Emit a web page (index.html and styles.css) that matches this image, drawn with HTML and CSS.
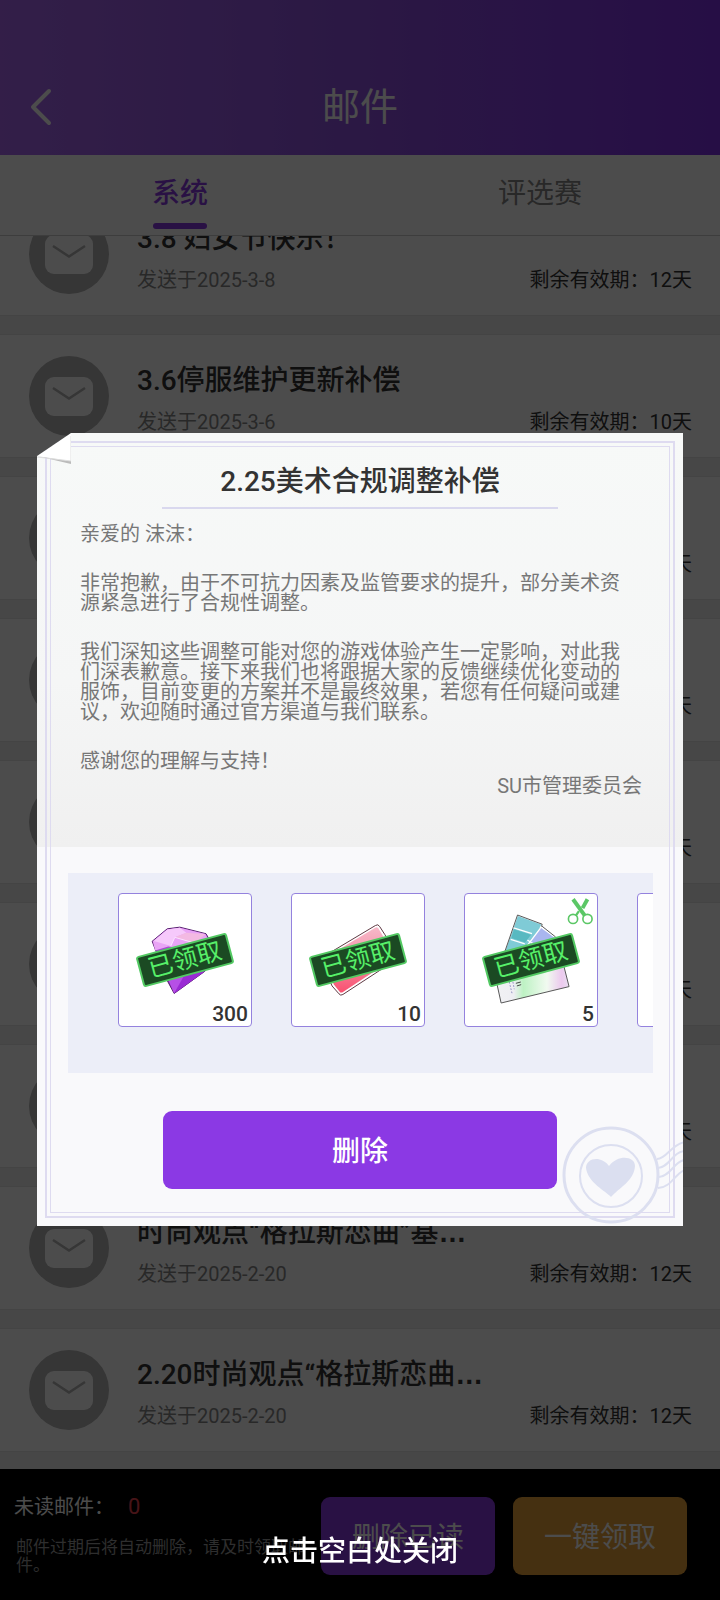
FILE: index.html
```html
<!DOCTYPE html>
<html lang="zh-CN">
<head>
<meta charset="utf-8">
<meta name="viewport" content="width=device-width, initial-scale=1">
<title>邮件</title>
<link rel="stylesheet" href="styles.css">
</head>
<body>
<svg class="defs" aria-hidden="true">
  <symbol id="mail" viewBox="0 0 80 80">
    <circle cx="40" cy="40" r="40" fill="#b4b4b4"/>
    <rect x="16" y="21" width="48" height="39" rx="9" fill="#fff"/>
    <path d="M24 32 40 42.500 56 32" fill="none" stroke="#b4b4b4" stroke-width="2.500"/>
  </symbol>
</svg>

<div class="page">
  <header class="topbar">
    <button class="back" aria-label="返回">
      <svg viewBox="0 0 24 40"><path d="M20 4 4 20 20 36" fill="none" stroke="currentColor" stroke-width="4" stroke-linecap="round" stroke-linejoin="round"/></svg>
    </button>
    <h1 class="topbar-title">邮件</h1>
  </header>

  <nav class="tabs">
    <button class="tab tab-active">系统</button>
    <button class="tab">评选赛</button>
  </nav>

  <main class="scroller">
    <ul class="mails">
      <li class="mail"><svg class="mail-icon"><use href="#mail"/></svg><div class="mail-text"><h2 class="mail-title">3.8 妇女节快乐！</h2><div class="mail-meta"><span class="mail-date">发送于2025-3-8</span><span>剩余有效期：12天</span></div></div></li>
      <li class="mail"><svg class="mail-icon"><use href="#mail"/></svg><div class="mail-text"><h2 class="mail-title">3.6停服维护更新补偿</h2><div class="mail-meta"><span class="mail-date">发送于2025-3-6</span><span>剩余有效期：10天</span></div></div></li>
      <li class="mail"><svg class="mail-icon"><use href="#mail"/></svg><div class="mail-text"><div class="mail-meta"><span></span><span>天</span></div></div></li>
      <li class="mail"><svg class="mail-icon"><use href="#mail"/></svg><div class="mail-text"><div class="mail-meta"><span></span><span>天</span></div></div></li>
      <li class="mail"><svg class="mail-icon"><use href="#mail"/></svg><div class="mail-text"><div class="mail-meta"><span></span><span>天</span></div></div></li>
      <li class="mail"><svg class="mail-icon"><use href="#mail"/></svg><div class="mail-text"><div class="mail-meta"><span></span><span>天</span></div></div></li>
      <li class="mail"><svg class="mail-icon"><use href="#mail"/></svg><div class="mail-text"><div class="mail-meta"><span></span><span>天</span></div></div></li>
      <li class="mail"><svg class="mail-icon"><use href="#mail"/></svg><div class="mail-text"><h2 class="mail-title">时尚观点“格拉斯恋曲”基<span class="more">…</span></h2><div class="mail-meta"><span class="mail-date">发送于2025-2-20</span><span>剩余有效期：12天</span></div></div></li>
      <li class="mail"><svg class="mail-icon"><use href="#mail"/></svg><div class="mail-text"><h2 class="mail-title">2.20时尚观点“格拉斯恋曲<span class="more">…</span></h2><div class="mail-meta"><span class="mail-date">发送于2025-2-20</span><span>剩余有效期：12天</span></div></div></li>
    </ul>
  </main>

  <footer class="footer">
    <div class="footer-info">
      <p class="unread">未读邮件：<span class="unread-count">0</span></p>
      <p class="footer-note">邮件过期后将自动删除，请及时领取邮件。</p>
    </div>
    <button class="action action-purple">删除已读</button>
    <button class="action action-gold">一键领取</button>
  </footer>
</div>

<div class="overlay">
  <section class="letter" role="dialog" aria-labelledby="letter-title">
    <div class="letter-top">
      <h2 class="letter-title" id="letter-title">2.25美术合规调整补偿</h2>
      <div class="letter-body">
        <p>亲爱的 沫沫：</p>
        <p>非常抱歉，由于不可抗力因素及监管要求的提升，部分美术资源紧急进行了合规性调整。</p>
        <p>我们深知这些调整可能对您的游戏体验产生一定影响，对此我们深表歉意。接下来我们也将跟据大家的反馈继续优化变动的服饰，目前变更的方案并不是最终效果，若您有任何疑问或建议，欢迎随时通过官方渠道与我们联系。</p>
        <p>感谢您的理解与支持！</p>
      </div>
      <p class="letter-sign">SU市管理委员会</p>
    </div>

    <div class="rewards">
      <div class="reward">
        <svg class="reward-art" viewBox="0 0 402 402" aria-hidden="true">
          <defs><linearGradient id="gem" x1="0" y1="0" x2="0" y2="1"><stop offset="0" stop-color="#c55be8"/><stop offset="1" stop-color="#7417a8"/></linearGradient></defs>
          <path d="M101 144 147 106 185 101 265 121 296 175 262 235 168 303 146 262Z" fill="url(#gem)" stroke="#53206b" stroke-width="3" stroke-linejoin="round"/>
          <path d="M103 144 147 108 185 103 263 122 275 145 210 170 150 160 110 172Z" fill="#e9a4f5"/>
          <path d="M147 108 185 103 205 118 170 132 158 158 106 143Z" fill="#f6c9fb"/>
          <path d="M170 132 205 118 263 122 232 150Z" fill="#f3b9e2"/>
          <path d="M170 132 232 150M170 132 158 158" stroke="#fbe4ff" stroke-width="3"/>
          <path d="M168 303 200 240 262 235Z" fill="#9a2bd4"/>
          <path d="M168 303 150 262 200 245Z" fill="#b650e6"/>
        </svg>
        <span class="claimed">已领取</span><span class="count">300</span>
      </div>
      <div class="reward">
        <svg class="reward-art" viewBox="0 0 402 402" aria-hidden="true">
          <defs><linearGradient id="ticket" x1="0" y1="0" x2="0" y2="1"><stop offset="0" stop-color="#f7b9c9"/><stop offset=".5" stop-color="#f58fa6"/><stop offset="1" stop-color="#f9506f"/></linearGradient></defs>
          <path d="M85 197 254 96Q262 90 267 99L283 124 325 195 155 306Q148 311 143 304L122 280Z" fill="#fff" stroke="#5b3640" stroke-width="3"/>
          <path d="M91 200 256 101 262 103 316 193 153 300 147 300 128 276Z" fill="url(#ticket)"/>
        </svg>
        <span class="claimed">已领取</span><span class="count">10</span>
      </div>
      <div class="reward">
        <svg class="reward-art" viewBox="0 0 402 402" aria-hidden="true">
          <defs><linearGradient id="card" x1="0" y1="0" x2="1" y2="0"><stop offset="0" stop-color="#f1f1f4"/><stop offset=".25" stop-color="#eeeef3"/><stop offset=".38" stop-color="#bdf2c3"/><stop offset=".7" stop-color="#f1faf0"/><stop offset=".9" stop-color="#ecc9ee"/><stop offset="1" stop-color="#e8dff0"/></linearGradient></defs>
          <path d="M92 250 110 332 317 282 296 200Z" fill="url(#card)" stroke="#555" stroke-width="3" stroke-linejoin="round"/>
          <path d="M135 268 144 306M146 268 150 290" stroke="#8f8fc0" stroke-width="3" stroke-dasharray="5 5"/>
          <path d="M155 272 170 268M158 280 171 276" stroke="#444" stroke-width="3"/>
          <path d="M230 99 275 132 230 200 150 200Z" fill="#a9b6ef" stroke="#fff" stroke-width="5"/>
          <path d="M232 96 276 131" stroke="#555" stroke-width="3"/>
          <path d="M160 64 235 92 228 106 165 190 115 190Z" fill="#7fcbd6" stroke="#fff" stroke-width="4"/>
          <path d="M118 185 160 64 235 92 233 99" fill="none" stroke="#555" stroke-width="3" stroke-linejoin="round"/>
          <path d="M148 103 204 121M139 138 182 152M190 140 216 157" stroke="#fff" stroke-width="4"/>
          <path d="M149 107 201 124 183 148 141 134Z" fill="#58b9c1"/>
          <g fill="none" stroke="#5bc766">
            <circle cx="329" cy="76" r="14" stroke-width="5"/><circle cx="373" cy="76" r="14" stroke-width="5"/>
            <path d="M329 16 365 66" stroke-width="12"/><path d="M373 16 358 43" stroke-width="12"/><path d="M347 52 338 65" stroke-width="7"/>
          </g>
        </svg>
        <span class="claimed">已领取</span><span class="count">5</span>
      </div>
      <div class="reward"></div>
    </div>

    <button class="delete">删除</button>

    <svg class="postmark" viewBox="0 0 122 100" aria-hidden="true">
      <g fill="none" stroke="#dcdff0">
        <circle cx="50" cy="49" r="47" stroke-width="3"/>
        <circle cx="50" cy="50" r="31" stroke-width="2"/>
        <path d="M96 33C106 33 110 18 124 16M97 42C109 41 111 26 124 25M98 51C110 50 113 35 124 34M97 62C110 62 115 46 124 44" stroke-width="2"/>
      </g>
      <path d="M50 71C45 65 27 57 25 42 25 32 40 29 48 40 57 28 74 30 74 40 73 55 59 61 50 71Z" fill="#dbdff0"/>
    </svg>
    <svg class="fold" viewBox="0 0 34 32" aria-hidden="true">
      <path d="M0 23 34 31V28Z" fill="#bbb"/>
      <path d="M0 23 34 0V28Z" fill="#fff"/>
      <path d="M0 24 34 28V3" fill="none" stroke="#dedede"/>
    </svg>
  </section>
  <p class="hint">点击空白处关闭</p>
</div>
</body>
</html>
```
FILE: styles.css
```css
* { box-sizing: border-box; }
body, h1, h2, p, ul { margin: 0; padding: 0; }
body {
  font-family: Roboto, "Noto Sans CJK SC", sans-serif;
  font-size: 20px;
  line-height: 20px;
  color: #333;
}
button {
  border: 0;
  padding: 0;
  background: none;
  font-family: inherit;
  cursor: pointer;
}
.defs { display: none; }

.page {
  display: flex;
  flex-direction: column;
  height: 100vh;
  overflow: hidden;
  background: #eee;
}

.topbar {
  flex: none;
  display: grid;
  grid-template-columns: 60px 1fr 60px;
  align-items: center;
  padding: 79px 0 21px;
  height: 155px;
  background: linear-gradient(90deg, #aa67f2, #9254e4 45%, #8030e8);
  color: #fff;
}
.back { display: flex; justify-content: flex-end; padding-right: 7px; color: #fff; }
.back svg { width: 24px; height: 40px; }
.topbar-title { font-size: 38px; line-height: 54px; font-weight: 400; text-align: center; }

.tabs {
  flex: none;
  display: flex;
  height: 81px;
  background: #fff;
  border-bottom: 1px solid #ccc;
}
.tab {
  flex: 1;
  display: flex;
  flex-direction: column;
  align-items: center;
  padding-top: 23px;
  font-size: 28px;
  line-height: 32px;
  color: #888;
}
.tab-active { color: #8b39e4; font-weight: 500; }
.tab-active::after {
  content: "";
  width: 54px;
  height: 6px;
  margin-top: 13px;
  border-radius: 3px;
  background: #8b39e4;
}

.scroller { flex: 1; min-height: 0; overflow: hidden; }
.mails { list-style: none; margin-top: -43px; display: grid; gap: 20px; }
.mail {
  display: flex;
  gap: 28px;
  height: 122px;
  padding: 21px 28px 0 29px;
  background: #fff;
  box-shadow: 0 0 1px 1px #e4e4e4;
}
.mail-icon { flex: none; width: 80px; height: 80px; }
.mail-text { flex: 1; display: flex; flex-direction: column; justify-content: flex-end; height: 76px; }
.mail-title { font-size: 28px; line-height: 40px; margin-bottom: 11px; font-weight: 500; white-space: nowrap; }
.more { font-family: "Liberation Sans", sans-serif; font-weight: 700; }
.mail-meta { display: flex; justify-content: space-between; line-height: 20px; }
.mail-date { color: #888; }

.footer {
  flex: none;
  display: flex;
  align-items: flex-start;
  gap: 18px;
  height: 131px;
  padding: 28px 33px 0 14px;
  background: #000;
}
.footer-info { flex: 1; color: #fff; }
.unread { display: flex; gap: 14px; }
.unread-count { color: #ee4450; font-size: 22px; }
.footer-note { margin-right: -8px; padding: 21px 0 0 2px; font-size: 17px; line-height: 18px; color: #999; }
.action {
  width: 174px;
  height: 78px;
  padding-bottom: 3px;
  border-radius: 9px;
  color: #fff;
  font-size: 28px;
}
.action-purple { background: #8b39e4; }
.action-gold { background: #e6a039; }

.overlay {
  position: fixed;
  inset: 0;
  display: flex;
  flex-direction: column;
  padding: 433px 37px 34px;
  background: rgba(0, 0, 0, .7);
}
.letter {
  position: relative;
  background: #f9f9fb;
  clip-path: polygon(34px 0, 100% 0, 100% 100%, 0 100%, 0 23px);
}
.letter::before, .letter::after {
  content: "";
  position: absolute;
  pointer-events: none;
}
.letter::before { inset: 8px; border: 2px solid #dedbf0; }
.letter::after { inset: 13px; border: 1px solid #dedbf0; }
.letter-top {
  height: 414px;
  padding: 29px 41px 0 43px;
  background: linear-gradient(#f7f9f8, #f5f6f6 60%, #f0f0f0);
}
.letter-title {
  margin: 0 84px 15px 82px;
  padding-bottom: 5px;
  border-bottom: 2px solid #d9d8ee;
  font-size: 28px;
  line-height: 40px;
  font-weight: 500;
  text-align: center;
  white-space: nowrap;
}
.letter-body { display: grid; gap: 29px; padding-right: 10px; color: #777; }
.letter-sign { margin-top: 5px; text-align: right; color: #777; }

.rewards {
  display: flex;
  gap: 39px;
  height: 200px;
  margin: 26px 30px 38px 31px;
  padding: 20px 0 0 50px;
  overflow: hidden;
  background: #eceef8;
}
.reward {
  position: relative;
  flex: none;
  width: 134px;
  height: 134px;
  border: 1px solid #9482de;
  border-radius: 4px;
  background: #fff;
}
.reward-art { display: block; width: 100%; height: 100%; }
.claimed {
  position: absolute;
  left: 19px;
  top: 50px;
  width: 94px;
  height: 32px;
  border: 2px solid #52c962;
  border-radius: 3px;
  background: #1b4a23;
  color: #57f069;
  font-size: 25px;
  line-height: 27px;
  text-align: center;
  transform: rotate(-15deg);
}
.count { position: absolute; right: 3px; bottom: 1px; font-size: 21px; line-height: 22px; font-weight: 500; }

.delete {
  display: block;
  width: calc(100% - 252px);
  height: 78px;
  margin: 0 auto 37px;
  padding-bottom: 3px;
  border-radius: 9px;
  background: #8b39e4;
  color: #fff;
  font-size: 28px;
  font-weight: 500;
}
.postmark { position: absolute; right: 0; bottom: 0; width: 122px; height: 100px; }
.fold { position: absolute; left: 0; top: 0; z-index: 1; width: 34px; height: 32px; }
.hint {
  margin-top: auto;
  color: #fff;
  font-size: 28px;
  line-height: 28px;
  font-weight: 500;
  text-align: center;
}
```
